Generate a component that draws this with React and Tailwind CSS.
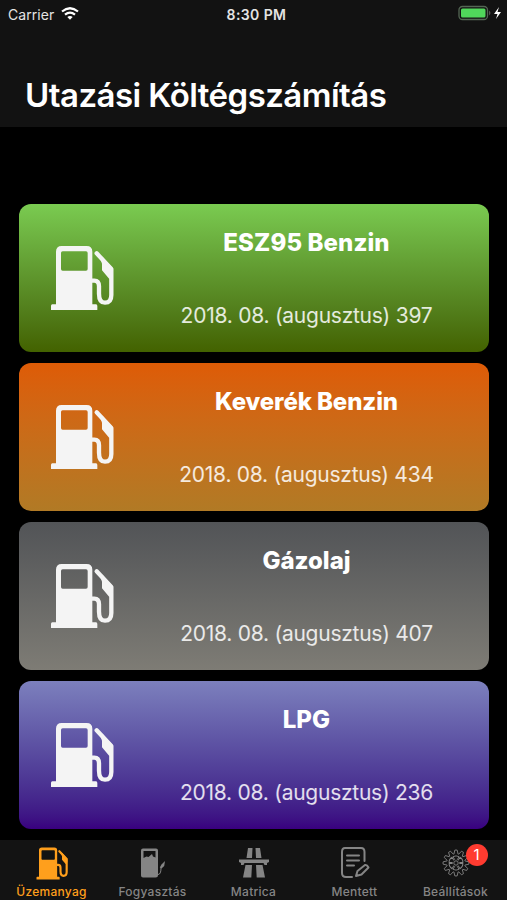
const fuels = [
  { name: 'ESZ95 Benzin', price: 397, bg: 'from-[#7acb51] to-[#436200]', space: 'tracking-[0.1px]' },
  { name: 'Keverék Benzin', price: 434, bg: 'from-[#de5b06] to-[#b17a25]', space: 'tracking-[-0.1px]' },
  { name: 'Gázolaj', price: 407, bg: 'from-[#525457] to-[#7e7c75]', space: 'tracking-[0px]' },
  { name: 'LPG', price: 236, bg: 'from-[#7c80bd] to-[#39007f]', space: 'tracking-[0.1px]' },
];

function FuelIcon({ className }) {
  return (
    <svg viewBox="30 30 192 198" className={className} fill="none" stroke="currentColor">
      <path
        fill="currentColor"
        stroke="none"
        fillRule="evenodd"
        d="M48 208V50Q48 33 65 33H140Q157 33 157 50V208H168Q172 208 172 213V225H33V213Q33 208 37 208ZM68 49Q63 49 63 54V102Q63 107 68 107H138Q143 107 143 102V54Q143 49 138 49Z"
      />
      <path d="M155 137H163Q177 137 177 154V176Q177 203 195 203Q214 203 214 180V102L170 55" strokeWidth="13" strokeLinecap="round" strokeLinejoin="round" />
      <path d="M178 62L186 86V106L208 132L218 122V100L188 66Z" fill="currentColor" stroke="none" />
    </svg>
  );
}

function PumpIcon() {
  return (
    <svg viewBox="0 0 26 30" className="w-[26px] h-[30px]" fill="currentColor">
      <path fillRule="evenodd" d="M3 0.500H16Q18 0.500 18 2.500V27Q18 29.500 15.500 29.500H3Q1 29.500 1 27.500V2.500Q1 0.500 3 0.500ZM3.500 3V10L6.500 8.500L8.500 9L12 6L13 8.500L15.500 9.500V3Z" />
      <path d="M25 13L24.200 18L21.500 20.500L19.800 19.500L21.500 16.500Z" />
      <path d="M21 20Q21 26.500 18 26.500" fill="none" stroke="currentColor" strokeWidth="1" />
    </svg>
  );
}

function RoadIcon() {
  return (
    <svg viewBox="0 0 32 30" className="w-8 h-[30px]" fill="currentColor">
      <path d="M10 0H14.5L14 10H8.5ZM17.5 0H22L23.5 10H18Z" />
      <path d="M1 11.5H31V14L29 15V17H26.5L25.5 15H6.5L5.5 17H3V15L1 14Z" />
      <path d="M7.5 17H14L13.3 29.5H5ZM18 17H24.5L27 29.5H18.7Z" />
    </svg>
  );
}

function NoteIcon() {
  return (
    <svg viewBox="0 0 30 32" className="w-[30px] h-8" fill="none" stroke="currentColor" strokeWidth="2" strokeLinecap="round" strokeLinejoin="round">
      <path d="M12 30H6Q2 30 2 26V5Q2 1 5 1H21Q24.500 1 24.500 5V14" />
      <path d="M7 8.500H19M7 13.500H19M7 18.500H14" />
      <path d="M16 29L17.500 24L25 18Q27 17.500 28.500 20.500L21.500 27.500Z" />
    </svg>
  );
}

// closed outline with 12 pointed teeth
const gearOutline = Array.from({ length: 12 }, (_, i) =>
  [[-13, 9.2], [-5, 13], [5, 13], [13, 9.2]].map(([offset, r]) => {
    const a = ((i * 30 + offset) * Math.PI) / 180;
    return `${(r * Math.cos(a)).toFixed(2)},${(r * Math.sin(a)).toFixed(2)}`;
  }).join(' ')
).join(' ');

function GearIcon() {
  return (
    <svg viewBox="-14 -14 28 28" className="w-7 h-7" fill="none" stroke="currentColor" strokeWidth="0.9" strokeLinejoin="round">
      <polygon points={gearOutline} />
      <circle r="2.200" />
      {[0, 60, 120, 180, 240, 300].map((a) => (
        <path key={a} d="M-1.200 -3.200L-3 -6.300Q0 -8 3 -6.300L1.200 -3.200" transform={`rotate(${a})`} />
      ))}
    </svg>
  );
}

function StatusBar() {
  return (
    <div className="grid grid-cols-3 items-center h-7 pl-2 pr-1 text-[14px] text-[#e4e4e4]">
      <div className="flex items-center gap-[7px]">
        <span className="tracking-[0.05px]">Carrier</span>
        <svg viewBox="0 0 18 13" className="w-[18px] h-[13px] -mt-[2px]" fill="none" stroke="#fff" strokeWidth="2.200">
          <path d="M1 4.500Q9 -2 17 4.500M4 7.700Q9 3.500 14 7.700" />
          <path d="M6.300 10Q9 7.800 11.700 10L9 12.800Z" fill="#fff" stroke="none" />
        </svg>
      </div>
      <span className="text-center font-semibold text-[14px] tracking-[0.4px] whitespace-nowrap pl-[2px]">8:30 PM</span>
      <div className="flex items-center justify-end">
        <svg viewBox="0 0 45 16" className="w-[45px] h-4 -mt-[2px]">
          <rect x="1" y="1.500" width="28.500" height="13" rx="3.500" fill="none" stroke="#536653" strokeWidth="1.300" />
          <rect x="3" y="3.500" width="24.500" height="9" rx="1.500" fill="#50d75b" />
          <path d="M31 5.500Q34 8 31 10.500Z" fill="#555" />
          <path d="M41 2L36 9H39.500L38 14L43 7H39.500Z" fill="#fff" />
        </svg>
      </div>
    </div>
  );
}

function FuelCard({ fuel }) {
  return (
    <div className={`flex items-center h-[148px] shrink-0 rounded-xl bg-linear-to-b pl-[31px] ${fuel.bg}`}>
      <FuelIcon className="w-16 h-[66px] shrink-0 text-[#f4f4f4]" />
      <div className="flex flex-col items-center flex-1 ml-[10px] pt-[3px] gap-[41px]">
        <h2 className={`text-[24px] leading-8 font-extrabold text-white ${fuel.space}`}>{fuel.name}</h2>
        <p className="text-[21px] leading-8 tracking-[-0.25px] text-white/85 whitespace-nowrap">2018. 08. (augusztus) {fuel.price}</p>
      </div>
    </div>
  );
}

function Tab({ icon, label, active, badge }) {
  return (
    <div className={`flex flex-col items-center w-[101px] ${active ? 'text-[#ff9f1c]' : 'text-[#858585]'}`}>
      <div className="relative flex items-center justify-center h-[34px]">
        {icon}
        {badge && (
          <span className="absolute -right-[18px] -top-[2px] w-[22px] h-[22px] rounded-full bg-[#ff3b30] text-white text-[15px] leading-[22px] text-center">
            {badge}
          </span>
        )}
      </div>
      <span className="mt-[4px] text-[12px] leading-4 font-medium tracking-[0.25px]">{label}</span>
    </div>
  );
}

export default function App() {
  return (
    <div className="flex flex-col w-[507px] h-[900px] overflow-hidden bg-black font-['Inter',sans-serif]">
      {/* Header */}
      <header className="h-[127px] shrink-0 bg-[#121212]">
        <StatusBar />
        <h1 className="mt-[47px] pl-[25px] text-[33px] leading-10 font-semibold tracking-[-0.55px] text-white whitespace-nowrap">
          Utazási Költégszámítás
        </h1>
      </header>

      {/* Fuel prices */}
      <main className="flex flex-col flex-1 gap-[11px] pt-[77px] pl-[19px] pr-[18px]">
        {fuels.map((fuel) => (
          <FuelCard key={fuel.name} fuel={fuel} />
        ))}
      </main>

      {/* Tab bar */}
      <nav className="flex h-[60px] shrink-0 pt-[6px] pl-px bg-[#131313]">
        <Tab active label="Üzemanyag" icon={<FuelIcon className="w-8 h-[33px]" />} />
        <Tab label="Fogyasztás" icon={<PumpIcon />} />
        <Tab label="Matrica" icon={<RoadIcon />} />
        <Tab label="Mentett" icon={<NoteIcon />} />
        <Tab label="Beállítások" icon={<GearIcon />} badge={1} />
      </nav>
    </div>
  );
}
